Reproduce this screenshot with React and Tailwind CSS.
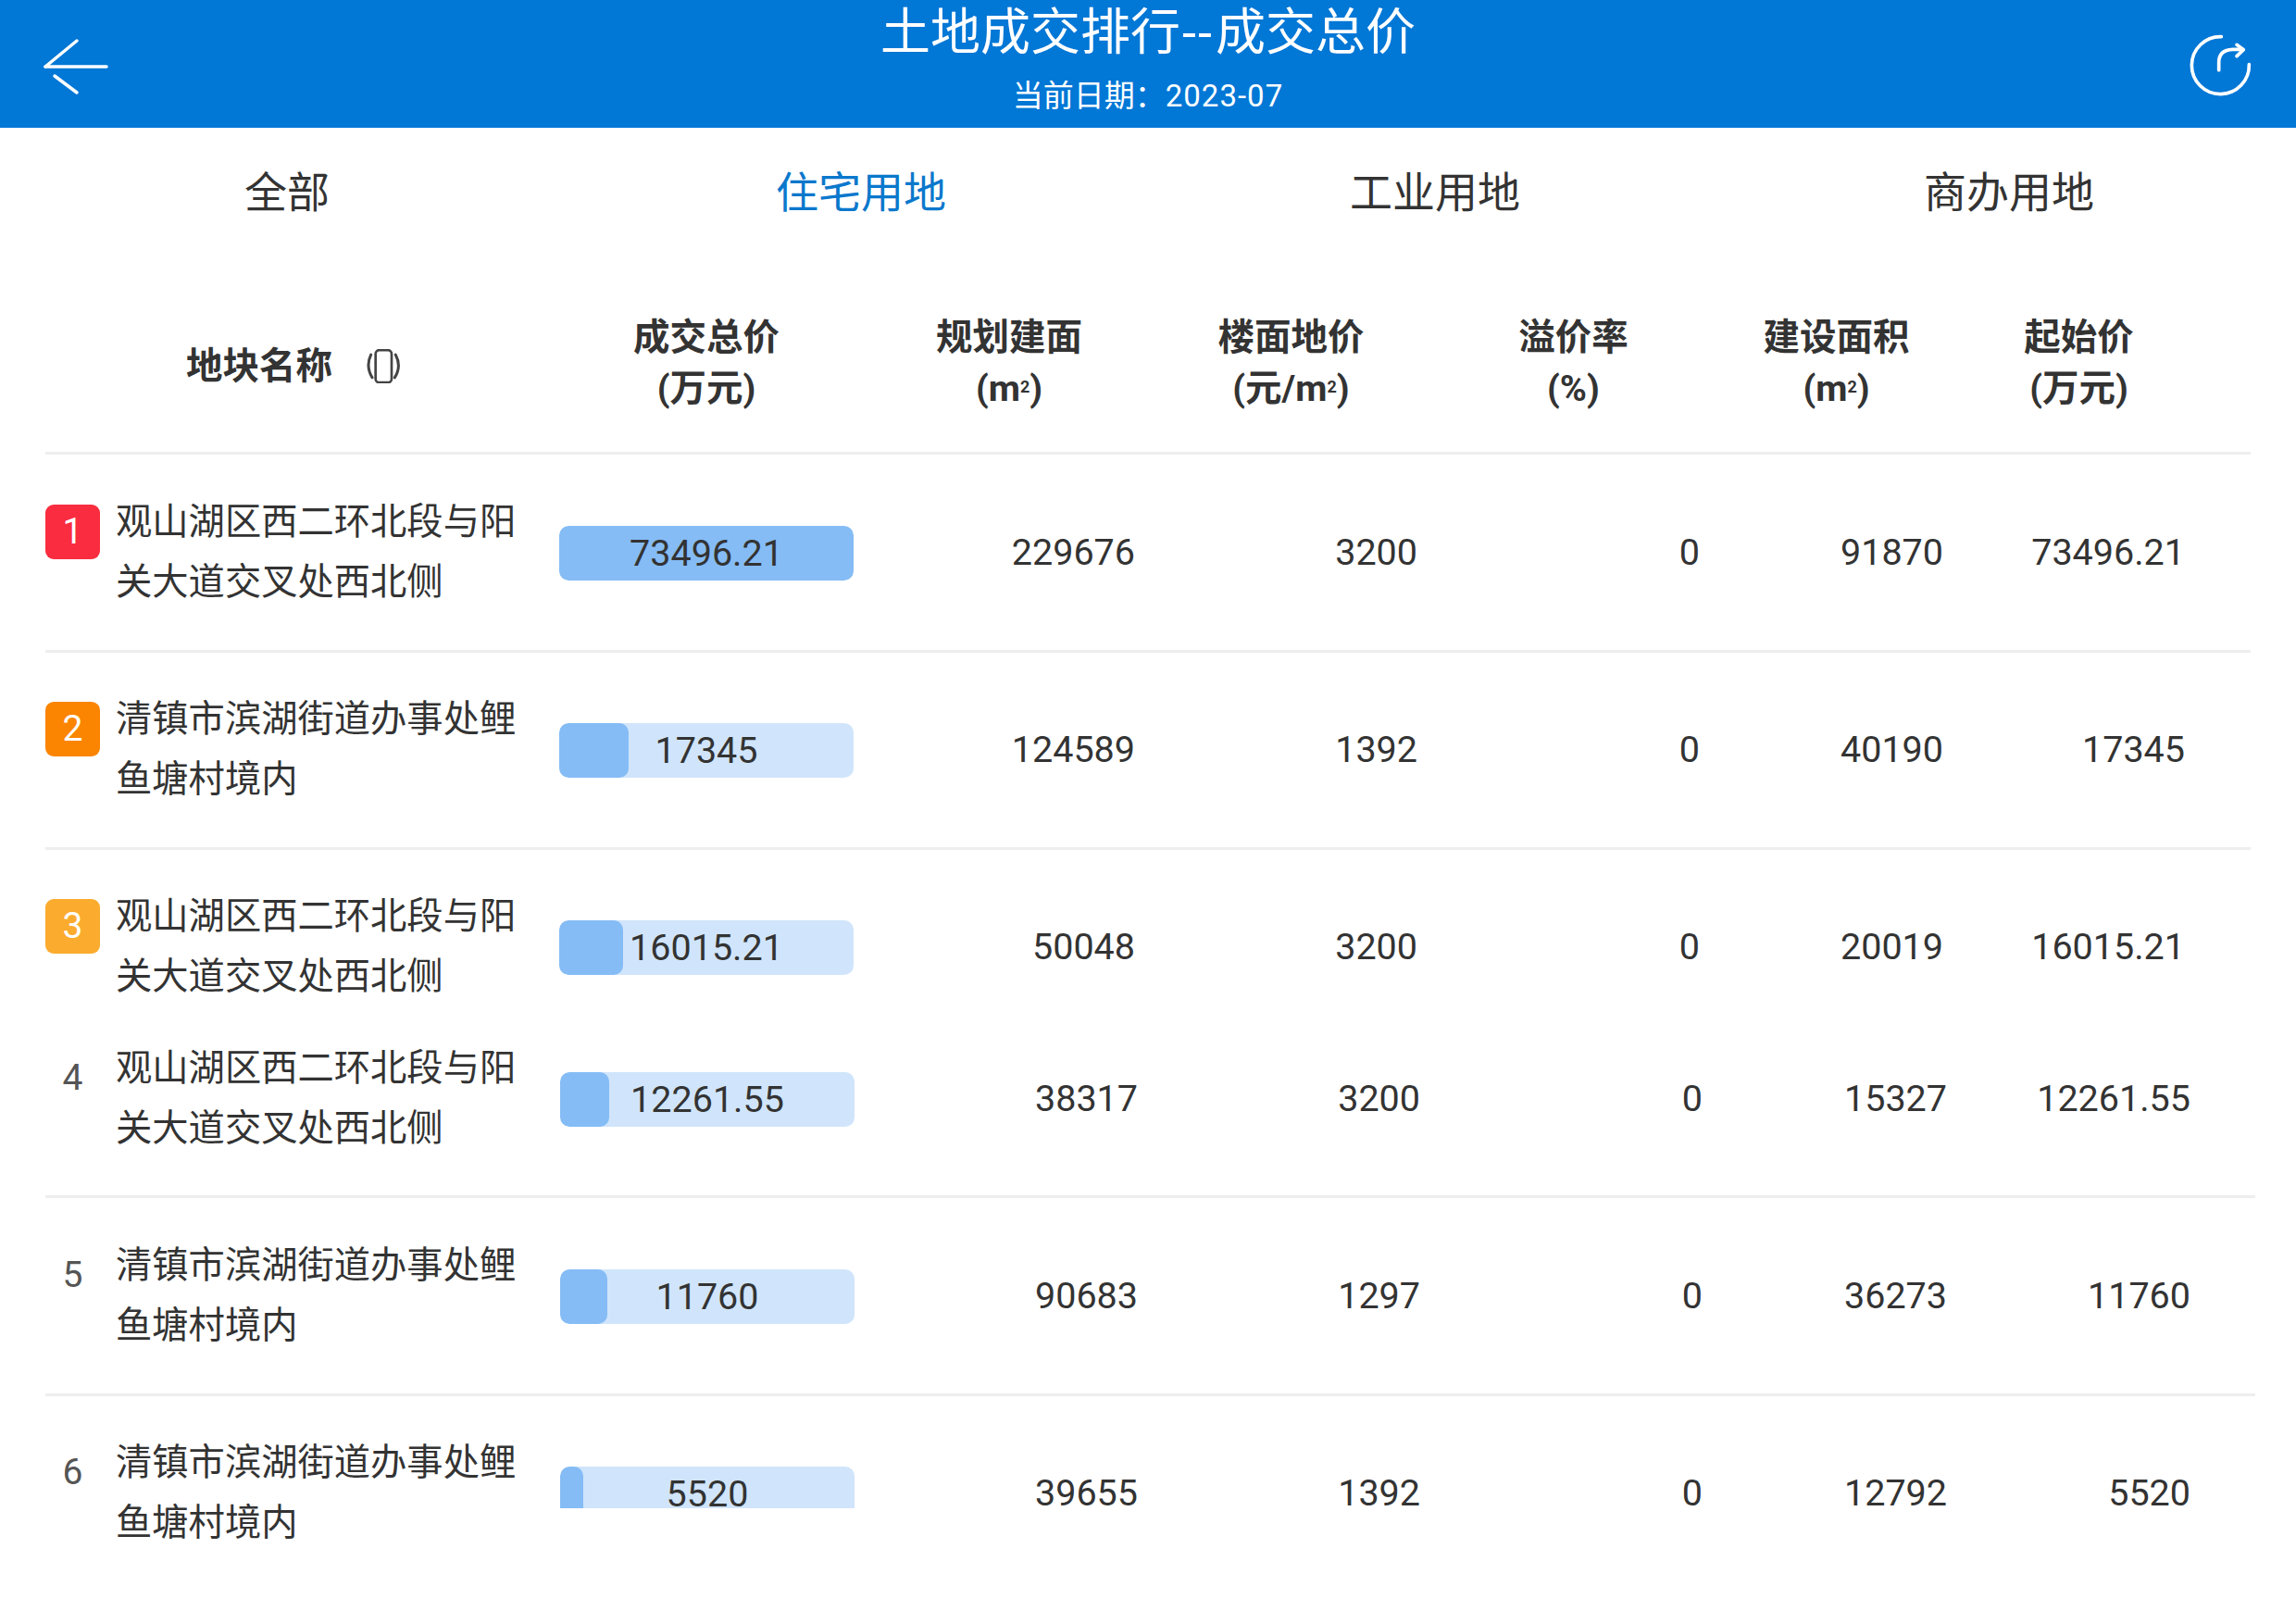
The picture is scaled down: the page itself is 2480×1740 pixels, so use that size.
const FONT = "[font-family:Roboto,'Noto_Sans_CJK_SC',sans-serif]";

const TABS = ["全部", "住宅用地", "工业用地", "商办用地"];

const HEADERS = [
  ["成交总价", "(万元)"],
  ["规划建面", <>(m<sup className="text-[18px] leading-none">2</sup>)</>],
  ["楼面地价", <>(元/m<sup className="text-[18px] leading-none">2</sup>)</>],
  ["溢价率", "(%)"],
  ["建设面积", <>(m<sup className="text-[18px] leading-none">2</sup>)</>],
  ["起始价", "(万元)"],
];

const NAME_A = "观山湖区西二环北段与阳关大道交叉处西北侧";
const NAME_B = "清镇市滨湖街道办事处鲤鱼塘村境内";

const UPPER = "w-[2382px] grid-cols-[523px_318px_272px_273px_273px_231px_229px]";
const LOWER = "w-[2387px] grid-cols-[524px_318px_274px_273px_273px_232px_231px]";

const ROWS = [
  { rank: 1, name: NAME_A, total: "73496.21", fill: 318, vals: ["229676", "3200", "0", "91870", "73496.21"], cols: UPPER, pad: "pt-[41px] pb-[40px] border-b-[3px]", badge: "bg-[#f92d3f]" },
  { rank: 2, name: NAME_B, total: "17345", fill: 75, vals: ["124589", "1392", "0", "40190", "17345"], cols: UPPER, pad: "pt-[40px] pb-[40px] border-b-[3px]", badge: "bg-[#fb8500]" },
  { rank: 3, name: NAME_A, total: "16015.21", fill: 69, vals: ["50048", "3200", "0", "20019", "16015.21"], cols: UPPER, pad: "pt-[40px] pb-[18px]", badge: "bg-[#fbab2d]" },
  { rank: 4, name: NAME_A, total: "12261.55", fill: 53, vals: ["38317", "3200", "0", "15327", "12261.55"], cols: LOWER, pad: "pt-[16px] pb-[39px] border-b-[3px]" },
  { rank: 5, name: NAME_B, total: "11760", fill: 51, vals: ["90683", "1297", "0", "36273", "11760"], cols: LOWER, pad: "pt-[41px] pb-[40px] border-b-[3px]" },
  { rank: 6, name: NAME_B, total: "5520", fill: 25, vals: ["39655", "1392", "0", "12792", "5520"], cols: LOWER, pad: "pt-[40px]", clipped: true },
];

function BackIcon() {
  return (
    <svg width="90" height="80" viewBox="0 0 90 80" fill="none" stroke="white" strokeWidth="3.5" strokeLinecap="round">
      <path d="M9 43H75" />
      <path d="M43 15L9 43" />
      <path d="M19 53L43 71" />
    </svg>
  );
}

function RefreshIcon() {
  return (
    <svg width="120" height="100" viewBox="0 0 360 300" fill="none" stroke="white" strokeWidth="11" strokeLinecap="round" strokeLinejoin="round">
      <path d="M178 62A93 93 0 1 0 268 152" />
      <path d="M170 170V145Q170 105 215 103H248" />
      <path d="M228 88L250 104L228 125" />
    </svg>
  );
}

function RotateIcon() {
  return (
    <svg width="40" height="37" viewBox="0 0 120 110" fill="none" stroke="#444" strokeLinecap="round">
      <rect x="35" y="3" width="52" height="105" rx="12" strokeWidth="8" />
      <path d="M20 18Q2 55 24 92" strokeWidth="9" />
      <path d="M100 18Q120 55 97 92" strokeWidth="9" />
    </svg>
  );
}

function Bar({ value, fill, clipped }) {
  return (
    <div className="relative h-[59px]">
      <div className={`absolute inset-x-0 top-0 overflow-hidden bg-[#d0e5fb] ${clipped ? "h-[45px] rounded-t-[10px]" : "h-[59px] rounded-[10px]"}`}>
        <div className="h-[59px] rounded-[10px] bg-[#85bcf5]" style={{ width: fill }} />
      </div>
      <div className="relative text-center text-[39.5px] leading-[59px] text-[#333]">{value}</div>
    </div>
  );
}

function Row({ row }) {
  return (
    <div className={`grid items-center gap-x-[32px] border-[#eeeeee] ${row.cols} ${row.pad}`}>
      <div className="flex gap-[17px]">
        {row.badge ? (
          <div className={`mt-[13px] flex h-[59px] w-[59px] shrink-0 items-center justify-center rounded-[9px] text-[39px] text-white ${row.badge}`}>{row.rank}</div>
        ) : (
          <div className="mt-[13px] flex h-[59px] w-[59px] shrink-0 items-center justify-center text-[39px] text-[#555]">{row.rank}</div>
        )}
        <div className="text-[39.3px] leading-[65px] text-[#333]">{row.name}</div>
      </div>
      <Bar value={row.total} fill={row.fill} clipped={row.clipped} />
      {row.vals.map((v, i) => (
        <div key={i} className="text-right text-[39.5px] text-[#333]">{v}</div>
      ))}
    </div>
  );
}

export default function App() {
  return (
    <div className={`min-h-[1740px] bg-white ${FONT}`}>
      <div className="grid h-[138px] grid-cols-[1fr_auto_1fr] items-center overflow-hidden bg-[#0177d6] text-white">
        <div className="pl-[40px]"><BackIcon /></div>
        <div className="flex flex-col items-center self-start pt-[9px]">
          <div className="text-[54px] leading-[54px]">土地成交排行<span className="mx-[2px] tracking-[2px]">--</span>成交总价</div>
          <div className="mt-[21px] text-[33px] leading-[40px]">当前日期：<span className="tracking-[1px]">2023-07</span></div>
        </div>
        <div className="flex justify-end pr-[20px]"><RefreshIcon /></div>
      </div>

      <div className="grid h-[138px] grid-cols-4 items-center pt-[3px] text-center text-[46px] text-[#333]">
        {TABS.map((t) => (
          <div key={t} className={t === "住宅用地" ? "text-[#0a78cc]" : ""}>{t}</div>
        ))}
      </div>

      <div className="ml-[49px]">
        <div className={`grid h-[215px] items-center gap-x-[32px] border-b-[3px] border-[#eeeeee] pt-[20px] text-center text-[39.5px] font-bold leading-[55px] text-[#333] ${UPPER}`}>
          <div className="mt-[6px] flex items-center gap-[35px] pl-[152px]">
            <span>地块名称</span>
            <RotateIcon />
          </div>
          {HEADERS.map(([a, b], i) => (
            <div key={i} className="whitespace-nowrap">
              <div>{a}</div>
              <div>{b}</div>
            </div>
          ))}
        </div>
        {ROWS.map((row) => (
          <Row key={row.rank} row={row} />
        ))}
      </div>
    </div>
  );
}
